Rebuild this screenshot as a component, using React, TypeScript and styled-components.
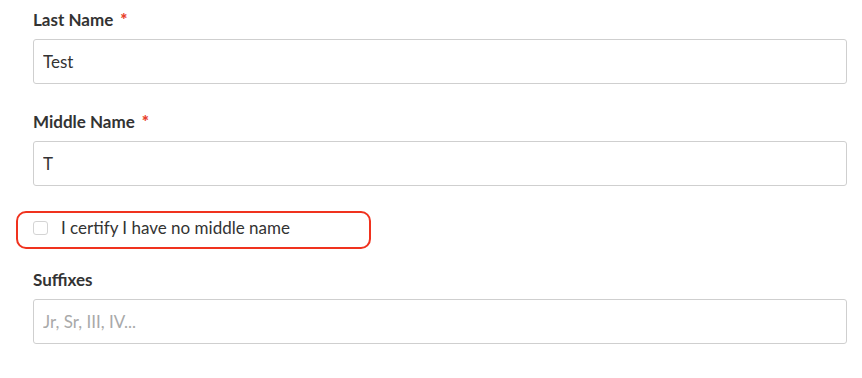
import styled, { createGlobalStyle } from 'styled-components';

const GlobalStyle = createGlobalStyle`
  body {
    margin: 0;
    background: #ffffff;
    font-family: Lato, "Noto Sans", sans-serif;
    color: #333333;
  }
`;

type Field = {
  label: string;
  required?: boolean;
  value?: string;
  placeholder?: string;
};

const fields: Field[] = [
  { label: 'Last Name', required: true, value: 'Test' },
  { label: 'Middle Name', required: true, value: 'T' },
];

export default function App() {
  return (
    <>
      <GlobalStyle />
      <Form>
        {fields.map((f) => (
          <Group key={f.label}>
            <Label>
              {f.label}
              {f.required && <Star>*</Star>}
            </Label>
            <Input defaultValue={f.value} />
          </Group>
        ))}
        <CheckRow>
          <Box type="checkbox" />
          <CheckText>I certify I have no middle name</CheckText>
        </CheckRow>
        <Group>
          <Label>Suffixes</Label>
          <Input placeholder="Jr, Sr, III, IV..." />
        </Group>
      </Form>
    </>
  );
}

const Form = styled.div`
  display: flex;
  flex-direction: column;
  padding: 9px 15px 0 33px;
`;

const Group = styled.div`
  display: flex;
  flex-direction: column;
  gap: 8px;
  margin-bottom: 27px;
`;

const Label = styled.label`
  display: block;
  height: 22px;
  font-size: 17px;
  line-height: 22px;
  font-weight: 700;
  color: #333333;
`;

const Star = styled.span`
  color: #e8412c;
  margin-left: 7px;
  font-size: 17px;
  font-weight: 900;
`;

const Input = styled.input`
  box-sizing: border-box;
  height: 45px;
  width: 100%;
  padding: 0 9px;
  border: 1px solid #cfcfcf;
  border-radius: 3px;
  font-family: Lato, "Noto Sans", sans-serif;
  font-size: 17px;
  color: #333333;
  outline: none;

  &::placeholder {
    color: #a9a9a9;
  }
`;

const CheckRow = styled.label`
  box-sizing: border-box;
  display: flex;
  align-items: center;
  gap: 13px;
  width: 355px;
  height: 38px;
  margin: -2px 0 20px -17px;
  padding: 0 0 5px 15px;
  border: 2px solid #f0321e;
  border-radius: 10px;
`;

const Box = styled.input`
  appearance: none;
  margin: 0;
  width: 15px;
  height: 14px;
  border: 1px solid #d4d4d4;
  border-radius: 3px;
  background: #ffffff;
`;

const CheckText = styled.span`
  font-size: 17px;
  line-height: 20px;
  color: #333333;
`;
